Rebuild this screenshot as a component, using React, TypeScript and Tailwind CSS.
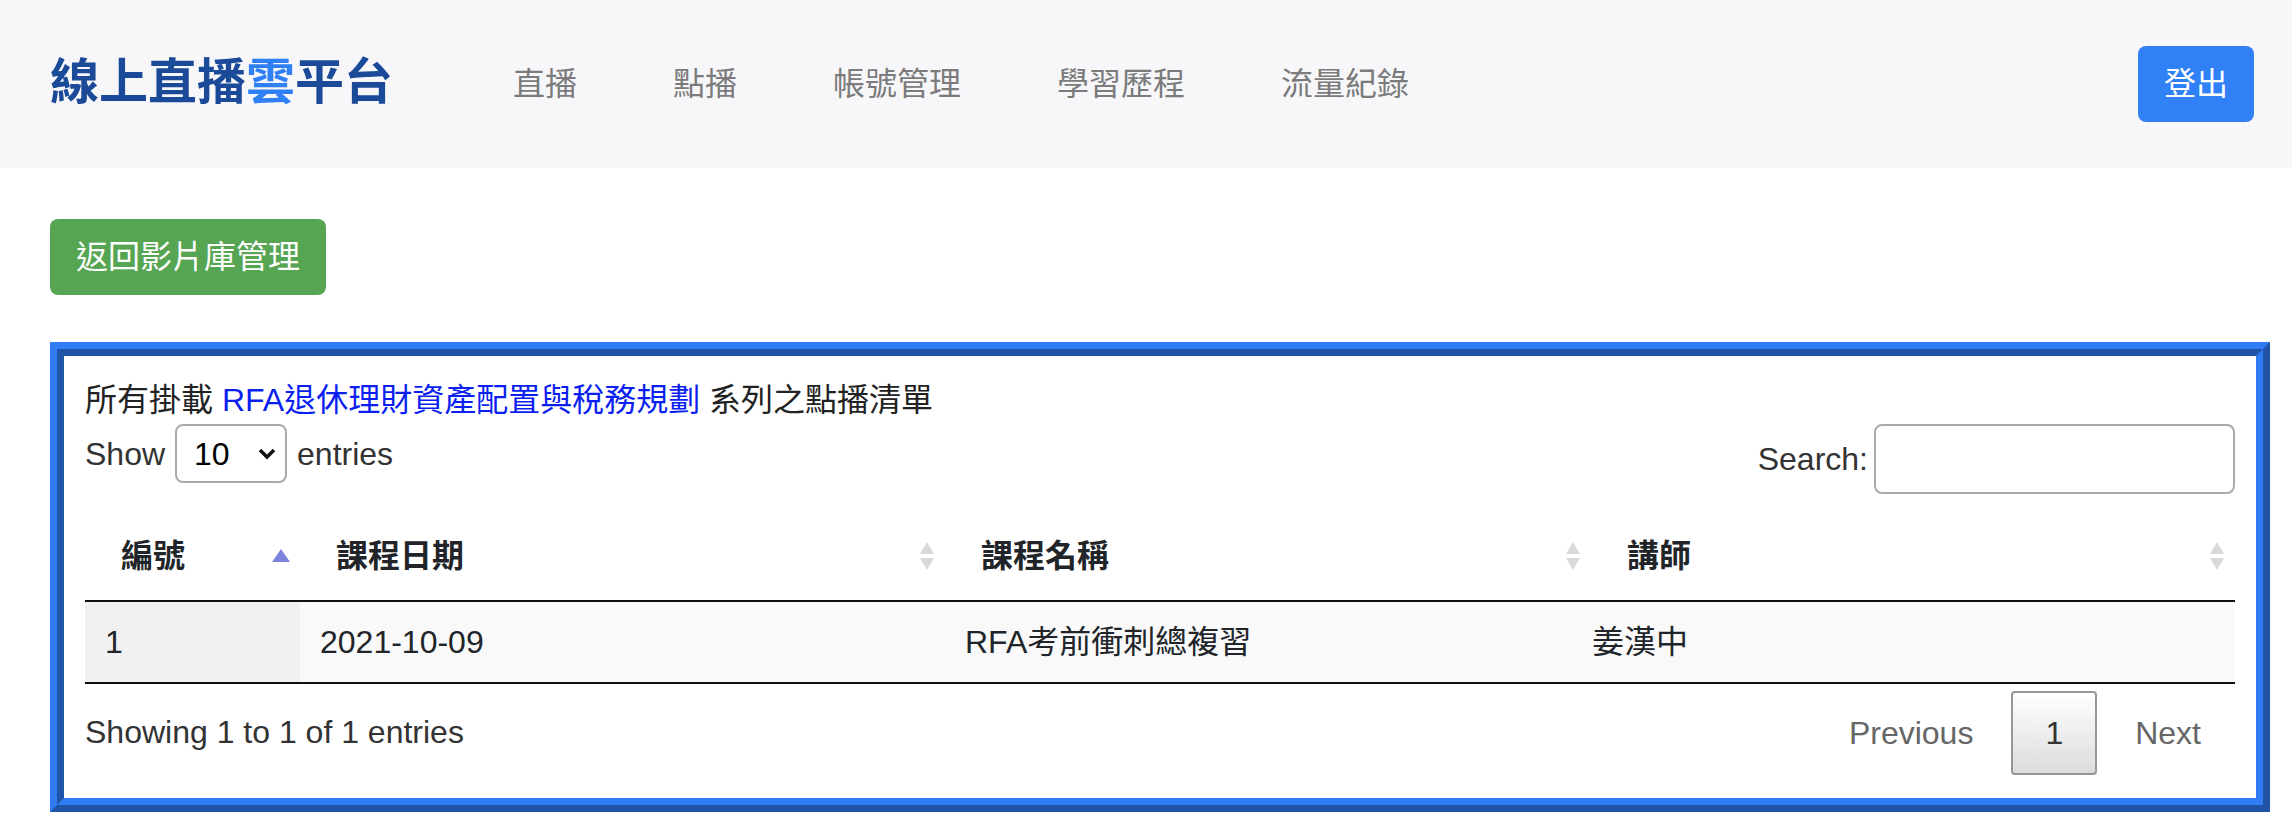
import React from "react";

const FONT = '"Liberation Sans", "Noto Sans CJK TC", sans-serif';

function SortBoth() {
  return (
    <svg width="16" height="30" viewBox="0 0 16 30" className="shrink-0">
      <polygon points="8,1 15,13 1,13" fill="#dadada" />
      <polygon points="1,17 15,17 8,29" fill="#dadada" />
    </svg>
  );
}

function SortAsc() {
  return (
    <svg width="18" height="14" viewBox="0 0 18 14" className="shrink-0">
      <polygon points="9,0 18,13 0,13" fill="#7b83da" />
    </svg>
  );
}

export default function App() {
  const navs = ["直播", "點播", "帳號管理", "學習歷程", "流量紀錄"];
  return (
    <div className="min-h-screen bg-white text-[#212529]" style={{ fontFamily: FONT }}>
      <header className="h-[168px] bg-[#f7f7f9] flex items-center pl-[50px] pr-[38px]">
        <div className="text-[49px] font-bold leading-none text-[#1b4a99] -mt-[4px]">
          線上直播<span className="text-[#2f7ff5]">雲</span>平台
        </div>
        <nav className="flex ml-[72px]">
          {navs.map((n) => (
            <a key={n} className="px-[48px] text-[32px] leading-[48px] text-[#7b7b7c]">
              {n}
            </a>
          ))}
        </nav>
        <button className="ml-auto h-[76px] px-[26px] rounded-[8px] bg-[#3080f6] text-white text-[32px] leading-[48px]">
          登出
        </button>
      </header>

      <main className="pl-[50px] pr-[22px]">
        <div className="pt-[51px]">
          <button className="h-[76px] px-[26px] rounded-[8px] bg-[#56a552] text-white text-[32px] leading-[48px]">
            返回影片庫管理
          </button>
        </div>

        <div className="mt-[47px] border-[7px] border-t-[#2f7cf4] border-l-[#2f7cf4] border-r-[#1f54a6] border-b-[#1f54a6]">
          <div className="border-[7px] border-t-[#1f54a6] border-l-[#1f54a6] border-r-[#2f7cf4] border-b-[#2f7cf4] px-[21px] pt-[20px] pb-[23px]">
            <div className="text-[32px] leading-[48px] text-[#222]">
              所有掛載 <a className="text-[#0a1ff0]">RFA退休理財資產配置與稅務規劃</a> 系列之點播清單
            </div>

            <div className="flex justify-between items-start">
              <div className="flex items-center text-[32px] leading-[48px] text-[#333] h-[59px]">
                <span>Show</span>
                <div className="ml-[10px] w-[112px] h-[59px] border-2 border-[#aaaaaa] rounded-[8px] flex items-center justify-between pl-[17px] pr-[8px] text-black">
                  <span>10</span>
                  <svg width="20" height="14" viewBox="0 0 20 14">
                    <polyline points="3,3 10,10 17,3" fill="none" stroke="#111" strokeWidth="3.5" />
                  </svg>
                </div>
                <span className="ml-[10px]">entries</span>
              </div>
              <div className="flex items-center text-[32px] leading-[48px] text-[#333]">
                <span>Search:</span>
                <div className="ml-[6px] w-[361px] h-[70px] border-2 border-[#aaaaaa] rounded-[8px] bg-white" />
              </div>
            </div>

            <table className="w-full mt-[18px] border-collapse text-[32px] leading-[48px] table-fixed">
              <colgroup>
                <col className="w-[215px]" />
                <col className="w-[645px]" />
                <col className="w-[646px]" />
                <col />
              </colgroup>
              <thead>
                <tr className="border-b-2 border-[#111]">
                  {[
                    ["編號", "asc"],
                    ["課程日期", "both"],
                    ["課程名稱", "both"],
                    ["講師", "both"],
                  ].map(([t, s]) => (
                    <th key={t} className="text-left font-bold pl-[36px] pr-[10px] py-[20px]">
                      <div className="flex items-center justify-between">
                        <span>{t}</span>
                        {s === "asc" ? <SortAsc /> : <SortBoth />}
                      </div>
                    </th>
                  ))}
                </tr>
              </thead>
              <tbody>
                <tr className="border-b-2 border-[#111] bg-[#f9f9f9]">
                  <td className="bg-[#f1f1f1] px-[20px] py-[16px]">1</td>
                  <td className="px-[20px] py-[16px]">2021-10-09</td>
                  <td className="px-[20px] py-[16px]">RFA考前衝刺總複習</td>
                  <td className="pl-[1px] pr-[20px] py-[16px]">姜漢中</td>
                </tr>
              </tbody>
            </table>

            <div className="flex justify-between items-start mt-[7px]">
              <div className="pt-[17px] text-[32px] leading-[48px] text-[#333]">
                Showing 1 to 1 of 1 entries
              </div>
              <div className="flex items-center text-[32px] leading-[48px]">
                <span className="px-[32px] py-[16px] border-2 border-transparent text-[#666]">Previous</span>
                <span className="ml-[4px] px-[32px] py-[16px] border-2 border-[#979797] rounded-[4px] bg-gradient-to-b from-white to-[#dcdcdc] text-[#333]">
                  1
                </span>
                <span className="ml-[4px] px-[32px] py-[16px] border-2 border-transparent text-[#666]">Next</span>
              </div>
            </div>
          </div>
        </div>
      </main>
    </div>
  );
}
